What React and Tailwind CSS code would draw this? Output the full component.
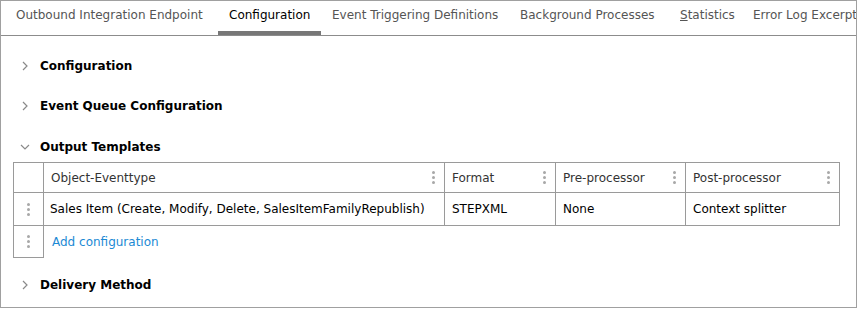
import React from 'react'

const tabs = [
    { label: 'Outbound Integration Endpoint', width: 'w-[213px]' },
    { label: 'Configuration', width: 'w-[103px]', active: true },
    { label: 'Event Triggering Definitions', width: 'w-[188px]' },
    { label: 'Background Processes', width: 'w-[160px]' },
    { label: 'Statistics', width: 'w-[73px]', accessKey: true },
    { label: 'Error Log Excerpt', width: 'w-[140px]' },
]

const Dots = () => (
    <div className="flex flex-col gap-[2px]">
        <span className="block w-[3px] h-[3px] rounded-full bg-[#a8a8a8]" />
        <span className="block w-[3px] h-[3px] rounded-full bg-[#a8a8a8]" />
        <span className="block w-[3px] h-[3px] rounded-full bg-[#a8a8a8]" />
    </div>
)

const Chevron = ({ open }) => (
    <svg width="10" height="10" viewBox="0 0 10 10" className="shrink-0">
        {open ? (
            <path d="M1 3 L5 7 L9 3" fill="none" stroke="#8a8a8a" strokeWidth="1.2" />
        ) : (
            <path d="M3 1 L7 5 L3 9" fill="none" stroke="#8a8a8a" strokeWidth="1.2" />
        )}
    </svg>
)

const Section = ({ title, open, className }) => (
    <div className={`flex items-center h-[20px] pl-[19px] gap-[10px] ${className || ''}`}>
        <Chevron open={open} />
        <span className="font-bold text-black">{title}</span>
    </div>
)

const HeaderCell = ({ label, width }) => (
    <div className={`${width} flex items-center justify-between pl-[7px] pr-[9px] border-l border-[#9a9a9a] text-[#333]`}>
        <span>{label}</span>
        <Dots />
    </div>
)

const App = () => {
    return (
        <div
            className="w-[857px] h-[308px] border border-[#a0a0a0] bg-white overflow-hidden text-[12px]"
            style={{ fontFamily: '"DejaVu Sans", Verdana, sans-serif' }}
        >
            {/* Tabs */}
            <div className="flex h-[35px] border-b border-[#8c8c8c] pl-[4px] whitespace-nowrap">
                {tabs.map(tab => (
                    <div
                        key={tab.label}
                        className={`${tab.width} shrink-0 px-[11px] pb-[3px] flex items-center border-b-[4px] ${tab.active ? 'border-[#777] text-black' : 'border-transparent text-[#555]'}`}
                    >
                        {tab.accessKey ? (
                            <span><span className="underline">S</span>tatistics</span>
                        ) : tab.label}
                    </div>
                ))}
            </div>

            {/* Sections */}
            <Section title="Configuration" className="mt-[20px]" />
            <Section title="Event Queue Configuration" className="mt-[20px]" />
            <Section title="Output Templates" open className="mt-[21px]" />

            {/* Output templates table */}
            <div className="ml-[12px] mt-[5px] w-[827px]">
                <div className="flex h-[31px] border border-[#9a9a9a]">
                    <div className="w-[29px]" />
                    <HeaderCell label="Object-Eventtype" width="w-[401px]" />
                    <HeaderCell label="Format" width="w-[111px]" />
                    <HeaderCell label="Pre-processor" width="w-[130px]" />
                    <HeaderCell label="Post-processor" width="flex-1" />
                </div>
                <div className="flex h-[33px] border border-t-0 border-[#9a9a9a] text-black">
                    <div className="w-[29px] flex items-center justify-center"><Dots /></div>
                    <div className="w-[401px] flex items-center pl-[6px] border-l border-[#9a9a9a]">Sales Item (Create, Modify, Delete, SalesItemFamilyRepublish)</div>
                    <div className="w-[111px] flex items-center pl-[7px] border-l border-[#9a9a9a]">STEPXML</div>
                    <div className="w-[130px] flex items-center pl-[7px] border-l border-[#9a9a9a]">None</div>
                    <div className="flex-1 flex items-center pl-[7px] border-l border-[#9a9a9a]">Context splitter</div>
                </div>
                <div className="flex h-[32px]">
                    <div className="w-[31px] flex items-center justify-center border border-t-0 border-[#9a9a9a]"><Dots /></div>
                    <div className="flex items-center pl-[8px] text-[#1c8ad4]">Add configuration</div>
                </div>
            </div>

            <Section title="Delivery Method" className="mt-[17px]" />
        </div>
    )
}

export default App
